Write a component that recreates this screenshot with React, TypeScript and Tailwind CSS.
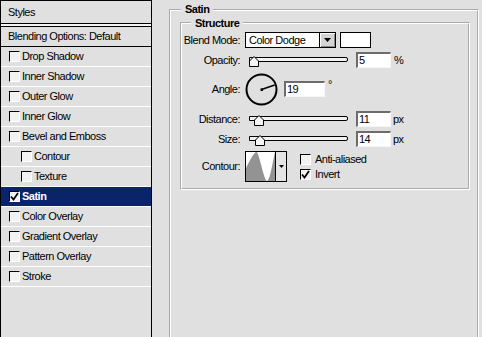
import React from "react";
import clsx from "clsx";

type StyleRow = { name: string; sub?: boolean; checked?: boolean; selected?: boolean };

const rows: StyleRow[] = [
  { name: "Drop Shadow" },
  { name: "Inner Shadow" },
  { name: "Outer Glow" },
  { name: "Inner Glow" },
  { name: "Bevel and Emboss" },
  { name: "Contour", sub: true },
  { name: "Texture", sub: true },
  { name: "Satin", checked: true, selected: true },
  { name: "Color Overlay" },
  { name: "Gradient Overlay" },
  { name: "Pattern Overlay" },
  { name: "Stroke" },
];

const groove =
  "border-2 border-white [--tw-border-style:groove] [border-style:groove]";

const Check = ({ checked }: { checked?: boolean }) => (
  <span className="flex h-[11px] w-[11px] shrink-0 items-center justify-center border border-t-black border-l-black border-r-white border-b-white bg-[#f2f2f2]">
    {checked && (
      <svg width="9" height="9" viewBox="0 0 9 9">
        <path d="M1 4.5 L3.5 7.5 L8 1" fill="none" stroke="black" strokeWidth="1.7" />
      </svg>
    )}
  </span>
);

const Field = ({ value, width }: { value: string; width: string }) => (
  <div
    className={clsx(
      "flex h-[16px] items-center border-t-2 border-l-2 border-r border-b border-t-[#6c6c6c] border-l-[#6c6c6c] border-r-[#f6f6f6] border-b-[#f6f6f6] bg-white pl-[1px] leading-none",
      width
    )}
  >
    {value}
  </div>
);

const Slider = ({ thumb }: { thumb: string }) => (
  <div className="relative ml-[4px] h-[16px] w-[99px]">
    <div className="mt-[5px] h-[5px] w-full rounded-r-[2px] border border-black bg-[#f2f2f2]" />
    <svg className={clsx("absolute top-[4px]", thumb)} width="10" height="11" viewBox="0 0 10 11">
      <path d="M5 0.5 L9.5 5 L9.5 10.5 L0.5 10.5 L0.5 5 Z" fill="#f4f4f4" stroke="black" strokeWidth="1" />
    </svg>
  </div>
);

const Row = ({
  label,
  className,
  children,
}: {
  label: string;
  className?: string;
  children: React.ReactNode;
}) => (
  <div className={clsx("flex items-center", className)}>
    <span className="w-[58px] shrink-0 text-right">{label}</span>
    <div className="ml-[5px] flex items-center">{children}</div>
  </div>
);

export default function App() {
  return (
    <div className="flex h-[337px] w-[482px] overflow-hidden bg-[#e0e0e0] text-[11px] tracking-[-0.5px] text-black [font-family:'Liberation_Sans',Arial,sans-serif]">
      {/* styles list */}
      <div className="flex h-full w-[152px] shrink-0 flex-col border-x border-black">
        <div className="flex h-[24px] items-center border-y border-black pl-[7px]">Styles</div>
        <div className="h-[2px] bg-[#f4f4f4]" />
        <div className="flex h-[21px] items-center border-y border-black pl-[7px]">
          Blending Options: Default
        </div>
        {rows.map((r) => (
          <div
            key={r.name}
            className={clsx(
              "flex h-[20px] items-center gap-[2px] border-b border-white",
              r.sub ? "pl-[20px]" : "pl-[8px]",
              r.selected && "bg-[#0a246a] font-bold text-white"
            )}
          >
            <Check checked={r.checked} />
            <span>{r.name}</span>
          </div>
        ))}
      </div>

      {/* satin options */}
      <div className="flex-1 pl-[17px] pt-[3px]">
        <fieldset className={clsx("h-[400px] w-[310px] pl-[9px]", groove)}>
          <legend className="ml-[1px] px-[4px] font-bold leading-[13px]">Satin</legend>
          <fieldset className={clsx("w-[290px] pt-[2px] pb-[6px]", groove)}>
            <legend className="ml-[9px] px-[4px] font-bold leading-[14px]">Structure</legend>

            <Row label="Blend Mode:" className="h-[16px]">
              <div className="flex h-[16px] w-[91px] border border-black bg-white">
                <span className="flex flex-1 items-center pl-[3px] leading-none">Color Dodge</span>
                <span className="flex w-[16px] items-center justify-center border-l border-black bg-[#d4d4d4] shadow-[inset_1px_1px_0_#fff,inset_-1px_-1px_0_#8a8a8a]">
                  <svg width="7" height="4" viewBox="0 0 7 4">
                    <path d="M0 0 H7 L3.5 4 Z" fill="black" />
                  </svg>
                </span>
              </div>
              <div className="ml-[4px] h-[16px] w-[31px] border border-black bg-white" />
            </Row>

            <Row label="Opacity:" className="mt-[4px] h-[16px]">
              <Slider thumb="left-0" />
              <div className="ml-[8px]">
                <Field value="5" width="w-[35px]" />
              </div>
              <span className="ml-[3px]">%</span>
            </Row>

            <Row label="Angle:" className="mt-[5px] h-[32px]">
              <svg width="33" height="33" viewBox="0 0 33 33">
                <circle cx="16.5" cy="16.5" r="15" fill="none" stroke="black" strokeWidth="2" />
                <line x1="16.5" y1="16.5" x2="29.7" y2="12" stroke="black" strokeWidth="1.4" />
                <rect x="15.5" y="15.5" width="2.5" height="2.5" fill="black" />
              </svg>
              <div className="ml-[6px]">
                <Field value="19" width="w-[41px]" />
              </div>
              <span className="ml-[3px] self-start mt-[6px] leading-none">°</span>
            </Row>

            <Row label="Distance:" className="mt-[6px] h-[16px]">
              <Slider thumb="left-[5px]" />
              <div className="ml-[8px]">
                <Field value="11" width="w-[35px]" />
              </div>
              <span className="ml-[2px]">px</span>
            </Row>

            <Row label="Size:" className="mt-[4px] h-[16px]">
              <Slider thumb="left-[6px]" />
              <div className="ml-[8px]">
                <Field value="14" width="w-[35px]" />
              </div>
              <span className="ml-[2px]">px</span>
            </Row>

            <Row label="Contour:" className="mt-[4px] h-[31px]">
              <div className="flex h-[31px] w-[42px] border border-black bg-white">
                <svg width="29" height="29" viewBox="0 0 29 29">
                  <path
                    d="M0 29 L0 16 C4 8 8 0 10.5 0 C13 0 18 29 21 29 C24 29 27 8 29 0 L29 29 Z"
                    fill="#939393"
                  />
                </svg>
                <span className="flex flex-1 items-center justify-center border-l border-black bg-[#e4e4e4]">
                  <svg width="5" height="3" viewBox="0 0 5 3">
                    <path d="M0 0 H5 L2.5 3 Z" fill="black" />
                  </svg>
                </span>
              </div>
              <div className="ml-[13px] flex flex-col gap-[4px]">
                <label className="flex items-center gap-[4px] leading-none">
                  <Check />
                  <span>Anti-aliased</span>
                </label>
                <label className="flex items-center gap-[4px] leading-none">
                  <Check checked />
                  <span>Invert</span>
                </label>
              </div>
            </Row>
          </fieldset>
        </fieldset>
      </div>
    </div>
  );
}
